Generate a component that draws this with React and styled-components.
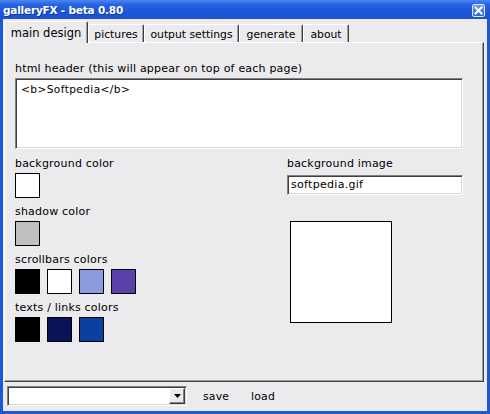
import React from "react";
import styled, { createGlobalStyle } from "styled-components";

const Global = createGlobalStyle`
  html, body { margin: 0; padding: 0; background: #ebeaed; }
  body { font-family: "DejaVu Sans", Verdana, sans-serif; }
`;

const Window = styled.div`
  width: 490px;
  height: 414px;
  display: flex;
  flex-direction: column;
  background: #1c58d8;
  box-sizing: border-box;
  overflow: hidden;
`;

const TitleBar = styled.div`
  height: 19px;
  display: flex;
  align-items: center;
  justify-content: space-between;
  padding: 0 5px 0 3px;
  background: linear-gradient(#4a86f2 0%, #2662e0 25%, #1d57d6 60%, #1b52cf 100%);
  color: #fff;
  font-family: "DejaVu Sans", Verdana, sans-serif;
  font-weight: bold;
  font-size: 10.5px;
  letter-spacing: -0.2px;
`;

const TitleText = styled.span`
  text-shadow: 1px 1px 0 #0d3a9a;
  padding-top: 1px;
`;

const CloseButton = styled.div`
  width: 11px;
  height: 11px;
  margin-top: 1px;
  border: 1px solid #dfe8fb;
  border-radius: 2px;
  background: linear-gradient(#6a97f0, #2e66dc);
  display: flex;
  align-items: center;
  justify-content: center;
`;

const Client = styled.div`
  flex: 1;
  margin: 0 3px 3px 3px;
  background: #ebeaed;
  display: flex;
  flex-direction: column;
  font-size: 11px;
  letter-spacing: 0.2px;
  color: #000;
`;

const TabStrip = styled.div`
  display: flex;
  align-items: flex-end;
  height: 23px;
  padding-left: 1px;
  position: relative;
  z-index: 2;
  letter-spacing: 0;
`;

const Tab = styled.div`
  box-sizing: border-box;
  width: ${(p) => p.$w}px;
  height: ${(p) => (p.$active ? 22 : 18)}px;
  margin-bottom: ${(p) => (p.$active ? -1 : 0)}px;
  background: #ebeaed;
  border-top: 1px solid #fff;
  border-left: 1px solid #fff;
  border-right: 1px solid #404040;
  box-shadow: inset -1px 0 0 #a0a0a0;
  border-radius: 2px 2px 0 0;
  display: flex;
  align-items: center;
  justify-content: center;
  font-size: ${(p) => (p.$active ? 11.5 : 10.8)}px;
  padding-top: ${(p) => (p.$active ? 0 : 1)}px;
`;

const Panel = styled.div`
  flex: 1;
  margin: 0 3px 0 1px;
  border-top: 1px solid #fff;
  border-left: 1px solid #fff;
  border-right: 1px solid #404040;
  border-bottom: 1px solid #404040;
  box-shadow: inset -1px -1px 0 #a0a0a0;
  padding: 19px 0 0 10px;
  display: flex;
  flex-direction: column;
`;

const Label = styled.div`
  height: 13px;
  line-height: 13px;
  white-space: nowrap;
`;

const inset = `
  box-sizing: border-box;
  background: #fff;
  border-top: 1px solid #808080;
  border-left: 1px solid #808080;
  border-right: 1px solid #fff;
  border-bottom: 1px solid #fff;
  box-shadow: inset 1px 1px 0 #404040, inset -1px -1px 0 #d8d6dc;
`;

const HeaderArea = styled.div`
  ${inset}
  width: 448px;
  height: 71px;
  margin-top: 3px;
  padding: 4px 5px;
  font-size: 10.6px;
  letter-spacing: 0.4px;
`;

const Columns = styled.div`
  display: flex;
  margin-top: 8px;
`;

const LeftCol = styled.div`
  width: 272px;
  display: flex;
  flex-direction: column;
`;

const RightCol = styled.div`
  display: flex;
  flex-direction: column;
`;

const Group = styled.div`
  display: flex;
  flex-direction: column;
  gap: 3px;
  margin-bottom: 7px;
`;

const SwatchRow = styled.div`
  display: flex;
  gap: 7px;
`;

const Swatch = styled.div`
  box-sizing: border-box;
  width: 25px;
  height: 25px;
  border: 1px solid #000;
  background: ${(p) => p.$c};
`;

const TextInput = styled.div`
  ${inset}
  width: 176px;
  height: 20px;
  margin-top: 5px;
  padding: 2px 3px;
  line-height: 14px;
  font-size: 11px;
  letter-spacing: 0.3px;
`;

const ImageBox = styled.div`
  box-sizing: border-box;
  width: 102px;
  height: 102px;
  margin: 26px 0 0 3px;
  background: #fff;
  border: 1px solid #000;
`;

const Footer = styled.div`
  height: 29px;
  display: flex;
  align-items: center;
  padding-left: 4px;
  padding-bottom: 1px;
  box-sizing: border-box;
`;

const Combo = styled.div`
  ${inset}
  width: 180px;
  height: 20px;
  display: flex;
  justify-content: flex-end;
  align-items: center;
  padding: 1px;
`;

const ComboButton = styled.div`
  box-sizing: border-box;
  width: 16px;
  height: 16px;
  background: #ebeaed;
  border-top: 1px solid #fff;
  border-left: 1px solid #fff;
  border-right: 1px solid #404040;
  border-bottom: 1px solid #404040;
  box-shadow: inset -1px -1px 0 #808080;
  display: flex;
  align-items: center;
  justify-content: center;
`;

const FooterLink = styled.span`
  margin-left: ${(p) => p.$ml}px;
  font-size: 10.8px;
  letter-spacing: 0.2px;
`;

const tabs = [
  { label: "main design", w: 84, active: true },
  { label: "pictures", w: 56 },
  { label: "output settings", w: 95 },
  { label: "generate", w: 64 },
  { label: "about", w: 46 },
];

export default function App() {
  return (
    <>
      <Global />
      <Window>
        <TitleBar>
          <TitleText>galleryFX - beta 0.80</TitleText>
          <CloseButton>
            <svg width="9" height="9" viewBox="0 0 9 9">
              <path d="M1.5 1.5 L7.5 7.5 M7.5 1.5 L1.5 7.5" stroke="#fff" strokeWidth="2" strokeLinecap="square" />
            </svg>
          </CloseButton>
        </TitleBar>
        <Client>
          <TabStrip>
            {tabs.map((t) => (
              <Tab key={t.label} $w={t.w} $active={t.active}>
                {t.label}
              </Tab>
            ))}
          </TabStrip>
          <Panel>
            <Label>html header (this will appear on top of each page)</Label>
            <HeaderArea>{"<b>Softpedia</b>"}</HeaderArea>
            <Columns>
              <LeftCol>
                <Group>
                  <Label>background color</Label>
                  <SwatchRow>
                    <Swatch $c="#ffffff" />
                  </SwatchRow>
                </Group>
                <Group>
                  <Label>shadow color</Label>
                  <SwatchRow>
                    <Swatch $c="#c0c0c0" />
                  </SwatchRow>
                </Group>
                <Group>
                  <Label>scrollbars colors</Label>
                  <SwatchRow>
                    <Swatch $c="#000000" />
                    <Swatch $c="#ffffff" />
                    <Swatch $c="#8c9bde" />
                    <Swatch $c="#5a40a8" />
                  </SwatchRow>
                </Group>
                <Group>
                  <Label>texts / links colors</Label>
                  <SwatchRow>
                    <Swatch $c="#000000" />
                    <Swatch $c="#0a1258" />
                    <Swatch $c="#0a40a0" />
                  </SwatchRow>
                </Group>
              </LeftCol>
              <RightCol>
                <Label>background image</Label>
                <TextInput>softpedia.gif</TextInput>
                <ImageBox />
              </RightCol>
            </Columns>
          </Panel>
          <Footer>
            <Combo>
              <ComboButton>
                <svg width="7" height="4" viewBox="0 0 7 4">
                  <path d="M0 0 H7 L3.5 4 Z" fill="#000" />
                </svg>
              </ComboButton>
            </Combo>
            <FooterLink $ml={16}>save</FooterLink>
            <FooterLink $ml={22}>load</FooterLink>
          </Footer>
        </Client>
      </Window>
    </>
  );
}
